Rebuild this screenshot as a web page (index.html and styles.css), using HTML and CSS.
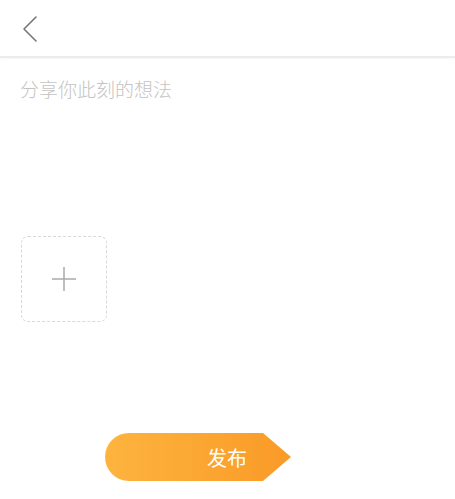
FILE: index.html
```html
<!DOCTYPE html>
<html lang="zh-CN">
<head>
  <meta charset="UTF-8">
  <meta name="viewport" content="width=device-width,initial-scale=1.0">
  <title>发布动态</title>
  <link rel="stylesheet" href="styles.css">
</head>
<body>
  <header class="topbar">
    <button class="back" aria-label="返回">
      <svg width="18" height="28" viewBox="0 0 18 28">
        <path d="M15 2 L3 14 L15 26" fill="none" stroke="#777" stroke-width="1.6" stroke-linecap="round" stroke-linejoin="round"/>
      </svg>
    </button>
  </header>

  <main class="editor">
    <textarea class="post-text" placeholder="分享你此刻的想法"></textarea>
    <div class="upload">
      <svg width="26" height="26" viewBox="0 0 26 26">
        <path d="M13 1 V25 M1 13 H25" stroke="#aaa" stroke-width="1.5"/>
      </svg>
    </div>
  </main>

  <footer class="actions">
    <button class="publish">
      <span>发布</span>
    </button>
  </footer>
</body>
</html>
```

FILE: styles.css
```css
:root {
  --orange-light: #fdb43f;
  --orange: #fa9a27;
  --hint: #c4c4c4;
}
*, *::before, *::after { box-sizing: border-box; }
body {
  margin: 0;
  width: 455px;
  height: 499px;
  background: #fff;
  font-family: "Noto Sans CJK SC", "Noto Sans", sans-serif;
  display: flex;
  flex-direction: column;
}

.topbar {
  height: 58px;
  padding: 15px 0 0 21px;
  border-bottom: 2px solid #ececec;
  box-shadow: 0 1px 2px rgba(0,0,0,0.04);
}
.back {
  border: none;
  background: none;
  padding: 0;
  display: block;
  cursor: pointer;
}

.editor {
  flex: 1;
  padding: 17px 21px 0 20px;
}
.post-text {
  display: block;
  width: 100%;
  height: 161px;
  border: none;
  outline: none;
  resize: none;
  padding: 0;
  font-family: inherit;
  font-size: 19px;
  font-weight: 300;
  line-height: 28px;
  color: #333;
}
.post-text::placeholder { color: var(--hint); }

.upload {
  width: 86px;
  height: 86px;
  margin-left: 1px;
  border: 1.5px dashed #d8d8d8;
  border-radius: 7px;
  display: flex;
  align-items: center;
  justify-content: center;
}

.actions {
  padding: 0 0 18px 105px;
}
.publish {
  width: 186px;
  height: 48px;
  border: none;
  padding: 0 0 0 102px;
  background: linear-gradient(90deg, var(--orange-light), var(--orange));
  clip-path: polygon(0 0, 158px 0, 186px 24px, 158px 48px, 0 48px);
  border-radius: 24px 0 0 24px;
  color: #fff;
  font-family: inherit;
  font-size: 20px;
  text-align: left;
  cursor: pointer;
}
```
